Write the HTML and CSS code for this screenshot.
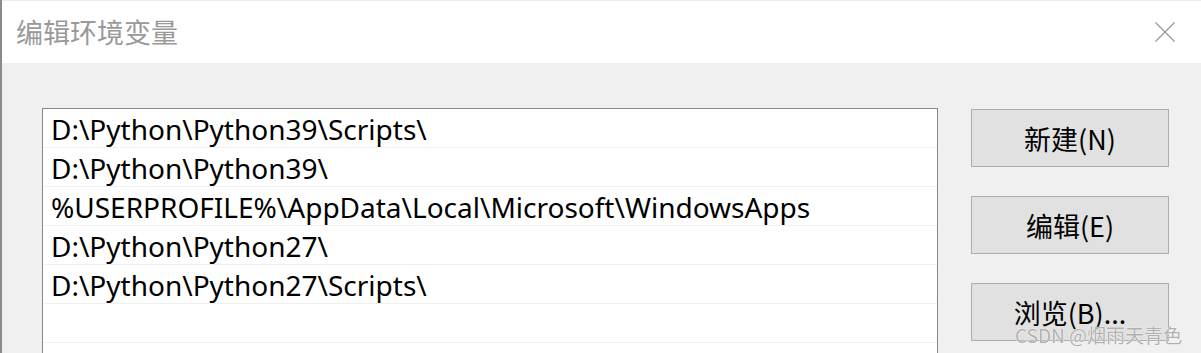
FILE: index.html
```html
<!DOCTYPE html>
<html lang="zh-CN">
<head>
    <meta charset="UTF-8">
    <meta name="viewport" content="width=device-width, initial-scale=1.0">
    <title>编辑环境变量</title>
    <link rel="stylesheet" href="styles.css">
</head>
<body>

    <div class="dialog">
        <div class="title-bar">
            <h2>编辑环境变量</h2>
            <svg class="close" width="20" height="20" viewBox="0 0 20 20">
                <path d="M0.5 0.5 L19.5 19.5 M19.5 0.5 L0.5 19.5" stroke="#999" stroke-width="1.3" fill="none"/>
            </svg>
        </div>

        <div class="content">
            <ul class="path-list">
                <li>D:\Python\Python39\Scripts\</li>
                <li>D:\Python\Python39\</li>
                <li>%USERPROFILE%\AppData\Local\Microsoft\WindowsApps</li>
                <li>D:\Python\Python27\</li>
                <li>D:\Python\Python27\Scripts\</li>
                <li></li>
            </ul>

            <div class="actions">
                <button>新建(N)</button>
                <button>编辑(E)</button>
                <button>浏览(B)...</button>
            </div>
        </div>
    </div>

    <div class="watermark">CSDN @烟雨天青色</div>

</body>
</html>
```

FILE: styles.css
```css
html, body {
    overflow: hidden;
}

body {
    margin: 0;
    padding: 0 0 0 2px;
    height: 353px;
    font-family: "Noto Sans", "Noto Sans CJK SC", sans-serif;
    background-color: #8a8a8a;
}

.dialog {
    background-color: #f0f0f0;
    height: 100%;
}

.title-bar {
    height: 62px;
    border-top: 1px solid #ebebeb;
    background-color: #fff;
    display: flex;
    align-items: center;
    justify-content: space-between;
    padding: 0 26px 0 14px;
}

h2 {
    margin: 0 0 2px 0;
    font-size: 27px;
    font-weight: normal;
    color: #999;
    font-family: "Noto Sans CJK SC", sans-serif;
}

.content {
    display: flex;
    align-items: flex-start;
    padding: 45px 0 0 40px;
}

.path-list {
    list-style: none;
    margin: 0;
    padding: 0;
    width: 894px;
    height: 245px;
    background-color: #fff;
    border: 1px solid #828790;
    border-bottom: none;
}

.path-list li {
    height: 38px;
    line-height: 40px;
    border-bottom: 1px solid #f0f0f0;
    padding-left: 8px;
    font-size: 28px;
    color: #000;
    white-space: nowrap;
}

.actions {
    display: flex;
    flex-direction: column;
    gap: 29px;
    margin-left: 33px;
    padding-top: 1px;
}

button {
    width: 198px;
    height: 58px;
    background-color: #e1e1e1;
    border: 1px solid #adadad;
    color: #000;
    font-size: 27px;
    font-family: "Noto Sans CJK SC", sans-serif;
    padding: 0;
}

.watermark {
    position: absolute;
    left: 1015px;
    top: 321px;
    font-size: 19px;
    color: #b0b0b0;
    text-shadow: 0 0 1px #fff, 0 0 1px #fff;
    font-family: "Noto Sans CJK SC", sans-serif;
    white-space: nowrap;
}
```
